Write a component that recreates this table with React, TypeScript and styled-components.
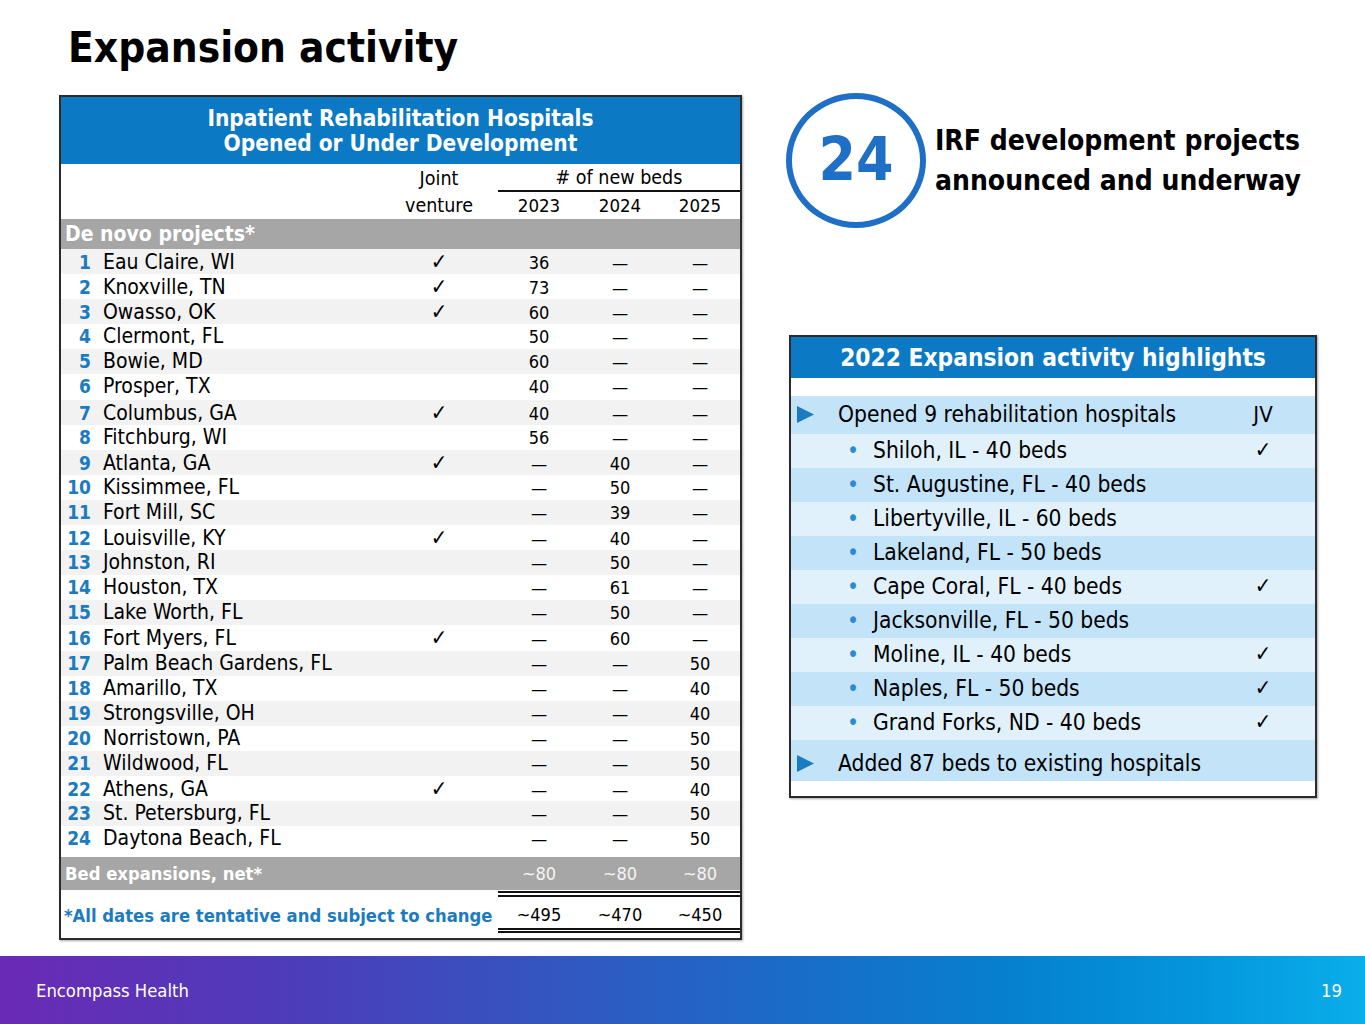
import styled, { createGlobalStyle } from "styled-components";

type Project = [number, string, boolean, string, string, string];

const projects: Project[] = [
  [1, "Eau Claire, WI", true, "36", "—", "—"],
  [2, "Knoxville, TN", true, "73", "—", "—"],
  [3, "Owasso, OK", true, "60", "—", "—"],
  [4, "Clermont, FL", false, "50", "—", "—"],
  [5, "Bowie, MD", false, "60", "—", "—"],
  [6, "Prosper, TX", false, "40", "—", "—"],
  [7, "Columbus, GA", true, "40", "—", "—"],
  [8, "Fitchburg, WI", false, "56", "—", "—"],
  [9, "Atlanta, GA", true, "—", "40", "—"],
  [10, "Kissimmee, FL", false, "—", "50", "—"],
  [11, "Fort Mill, SC", false, "—", "39", "—"],
  [12, "Louisville, KY", true, "—", "40", "—"],
  [13, "Johnston, RI", false, "—", "50", "—"],
  [14, "Houston, TX", false, "—", "61", "—"],
  [15, "Lake Worth, FL", false, "—", "50", "—"],
  [16, "Fort Myers, FL", true, "—", "60", "—"],
  [17, "Palm Beach Gardens, FL", false, "—", "—", "50"],
  [18, "Amarillo, TX", false, "—", "—", "40"],
  [19, "Strongsville, OH", false, "—", "—", "40"],
  [20, "Norristown, PA", false, "—", "—", "50"],
  [21, "Wildwood, FL", false, "—", "—", "50"],
  [22, "Athens, GA", true, "—", "—", "40"],
  [23, "St. Petersburg, FL", false, "—", "—", "50"],
  [24, "Daytona Beach, FL", false, "—", "—", "50"],
];

const opened: [string, boolean][] = [
  ["Shiloh, IL - 40 beds", true],
  ["St. Augustine, FL - 40 beds", false],
  ["Libertyville, IL - 60 beds", false],
  ["Lakeland, FL - 50 beds", false],
  ["Cape Coral, FL - 40 beds", true],
  ["Jacksonville, FL - 50 beds", false],
  ["Moline, IL - 40 beds", true],
  ["Naples, FL - 50 beds", true],
  ["Grand Forks, ND - 40 beds", true],
];

const GlobalStyle = createGlobalStyle`
  body {
    margin: 0;
    background: #fff;
  }
  * {
    box-sizing: border-box;
  }
`;

const Slide = styled.div`
  width: 1365px;
  height: 1024px;
  display: flex;
  flex-direction: column;
  overflow: hidden;
  font-family: "DejaVu Sans Condensed", "DejaVu Sans", sans-serif;
  font-stretch: condensed;
  color: #000;
`;

const Content = styled.main`
  flex: 1;
  padding: 21px 0 0 59px;
`;

const Title = styled.h1`
  margin: 0 0 20px 9px;
  font-size: 42px;
  line-height: 54px;
  font-weight: 700;
`;

const Columns = styled.div`
  display: grid;
  grid-template-columns: 683px 528px;
  column-gap: 47px;
  align-items: start;
`;

/* left table */

const TableCard = styled.section`
  border: 2px solid #2b2b2b;
  box-shadow: 1px 1px 2px rgba(0, 0, 0, 0.35);
  padding-bottom: 5px;
`;

const BlueHead = styled.header<{ $height: number; $size: number }>`
  height: ${({ $height }) => $height}px;
  background: #0b79c3;
  color: #fff;
  font-weight: 700;
  font-size: ${({ $size }) => $size}px;
  line-height: 1.07;
  text-align: center;
  white-space: nowrap;
  display: flex;
  flex-direction: column;
  justify-content: center;
`;

const cols = "36px 302px 99px 82px 80px 80px";

const ColHead = styled.div`
  display: grid;
  grid-template-columns: ${cols};
  grid-template-rows: 28px 27px;
  font-size: 19.5px;
  align-items: center;
  text-align: center;
  white-space: nowrap;
`;

const JvHead = styled.div<{ $row: number }>`
  grid-column: 3;
  grid-row: ${({ $row }) => $row};
  padding-right: 19px;
`;

const BedsHead = styled.div`
  grid-column: 4 / span 3;
  grid-row: 1;
  align-self: stretch;
  display: flex;
  align-items: center;
  justify-content: center;
  border-bottom: 2px solid #111;
`;

const YearHead = styled.div<{ $col: number }>`
  grid-column: ${({ $col }) => $col};
  grid-row: 2;
  font-size: 18.5px;
`;

const Band = styled.div<{ $height: number; $size: number }>`
  display: grid;
  grid-template-columns: ${cols};
  align-items: center;
  height: ${({ $height }) => $height}px;
  background: #a6a6a6;
  color: #fff;
  font-size: ${({ $size }) => $size}px;
`;

const BandLabel = styled.div`
  grid-column: 1 / span 3;
  padding-left: 4px;
  font-weight: 700;
`;

const BandValue = styled.div`
  text-align: center;
  color: #f4f4f4;
  font-size: 18px;
`;

const Row = styled.div<{ $shade: boolean }>`
  display: grid;
  grid-template-columns: ${cols};
  align-items: baseline;
  height: 25.1px;
  font-size: 18px;
  line-height: 25px;
  background: ${({ $shade }) => ($shade ? "#f2f2f2" : "#fff")};
`;

const Num = styled.div`
  text-align: right;
  padding-right: 6px;
  color: #1b7bc0;
  font-weight: 700;
  font-size: 19px;
`;

const Name = styled.div`
  padding-left: 6px;
  font-size: 21px;
  white-space: nowrap;
`;

const Jv = styled.div`
  text-align: center;
  padding-right: 19px;
  font-size: 22px;
`;

const Val = styled.div`
  text-align: center;
`;

const Gap = styled.div`
  height: 6px;
`;

const TotalRow = styled.div`
  display: grid;
  grid-template-columns: ${cols};
  align-items: stretch;
  margin-top: 1px;
  font-size: 18px;
`;

const Note = styled.div`
  grid-column: 1 / span 3;
  display: flex;
  align-items: center;
  padding: 6px 0 0 3px;
  color: #1b7bc0;
  font-weight: 700;
  font-size: 18.3px;
  white-space: nowrap;
`;

const Total = styled.div`
  height: 42px;
  display: flex;
  align-items: center;
  justify-content: center;
  padding-top: 4px;
  border-top: 6px double #111;
  border-bottom: 5px double #111;
`;

/* right column */

const Side = styled.div`
  display: flex;
  flex-direction: column;
`;

const Callout = styled.div`
  display: flex;
  align-items: center;
  gap: 9px;
  margin: -2px 0 0 -3px;
`;

const Circle = styled.div`
  flex: none;
  width: 140px;
  height: 135px;
  border-radius: 50%;
  border: 6px solid #1f6fc6;
  display: grid;
  place-items: center;
  color: #1f6fc6;
  font-size: 60px;
  font-weight: 700;
  padding-bottom: 4px;
`;

const CalloutText = styled.p`
  margin: 0;
  font-size: 28px;
  line-height: 40px;
  font-weight: 700;
  white-space: nowrap;
`;

const HighlightsCard = styled.section`
  margin-top: 107px;
  border: 2px solid #2b2b2b;
  box-shadow: 1px 1px 2px rgba(0, 0, 0, 0.35);
  padding-bottom: 15px;
`;

const Spacer = styled.div`
  height: 18px;
`;

const HRow = styled.div<{ $dark: boolean; $height: number; $shift: number }>`
  display: grid;
  grid-template-columns: 47px 1fr 60px;
  align-items: center;
  height: ${({ $height }) => $height}px;
  padding: 0 22px 0 0;
  padding-top: ${({ $shift }) => Math.max($shift, 0)}px;
  padding-bottom: ${({ $shift }) => Math.max(-$shift, 0)}px;
  font-size: 22.6px;
  background: ${({ $dark }) => ($dark ? "#c3e3f8" : "#e1f1fc")};
`;

const Marker = styled.div`
  padding-left: 6px;
  display: flex;
  align-items: center;
`;

const Bullet = styled.span`
  display: inline-block;
  width: 35px;
  padding-left: 9px;
  color: #2b8ad0;
`;

const HText = styled.div`
  white-space: nowrap;
`;

const HCheck = styled.div`
  text-align: center;
  font-size: 22px;
`;

const Footer = styled.footer`
  height: 68px;
  display: flex;
  align-items: center;
  justify-content: space-between;
  padding: 0 23px 0 36px;
  color: #fff;
  font-size: 18.3px;
  background: linear-gradient(
    90deg,
    #6a2ab5 0%,
    #4c3dba 22%,
    #3158c1 42%,
    #1a6cc9 58%,
    #0680cf 74%,
    #0496dd 88%,
    #0aaeea 100%
  );
`;

const Triangle = () => (
  <svg width="17" height="17" viewBox="0 0 17 17">
    <polygon points="0,0 17,8.5 0,17" fill="#1b7bc0" />
  </svg>
);

export default function App() {
  return (
    <Slide>
      <GlobalStyle />
      <Content>
        <Title>Expansion activity</Title>
        <Columns>
          <TableCard>
            <BlueHead $height={67} $size={22.5}>
              <span>Inpatient Rehabilitation Hospitals</span>
              <span>Opened or Under Development</span>
            </BlueHead>
            <ColHead>
              <JvHead $row={1}>Joint</JvHead>
              <BedsHead># of new beds</BedsHead>
              <JvHead $row={2}>venture</JvHead>
              <YearHead $col={4}>2023</YearHead>
              <YearHead $col={5}>2024</YearHead>
              <YearHead $col={6}>2025</YearHead>
            </ColHead>
            <Band $height={30} $size={21}>
              <BandLabel>De novo projects*</BandLabel>
            </Band>
            {projects.map(([n, name, jv, a, b, c]) => (
              <Row key={n} $shade={n % 2 === 1}>
                <Num>{n}</Num>
                <Name>{name}</Name>
                <Jv>{jv ? "✓" : ""}</Jv>
                <Val>{a}</Val>
                <Val>{b}</Val>
                <Val>{c}</Val>
              </Row>
            ))}
            <Gap />
            <Band $height={33} $size={18.3}>
              <BandLabel>Bed expansions, net*</BandLabel>
              <BandValue>~80</BandValue>
              <BandValue>~80</BandValue>
              <BandValue>~80</BandValue>
            </Band>
            <TotalRow>
              <Note>*All dates are tentative and subject to change</Note>
              <Total>~495</Total>
              <Total>~470</Total>
              <Total>~450</Total>
            </TotalRow>
          </TableCard>

          <Side>
            <Callout>
              <Circle>24</Circle>
              <CalloutText>
                IRF development projects
                <br />
                announced and underway
              </CalloutText>
            </Callout>

            <HighlightsCard>
              <BlueHead $height={41} $size={24.3}>
                2022 Expansion activity highlights
              </BlueHead>
              <Spacer />
              <HRow $dark $height={38} $shift={-2}>
                <Marker>
                  <Triangle />
                </Marker>
                <HText>Opened 9 rehabilitation hospitals</HText>
                <HCheck>JV</HCheck>
              </HRow>
              {opened.map(([label, jv], i) => (
                <HRow key={label} $dark={i % 2 === 1} $height={34} $shift={-3}>
                  <span />
                  <HText>
                    <Bullet>•</Bullet>
                    {label}
                  </HText>
                  <HCheck>{jv ? "✓" : ""}</HCheck>
                </HRow>
              ))}
              <HRow $dark $height={41} $shift={5}>
                <Marker>
                  <Triangle />
                </Marker>
                <HText>Added 87 beds to existing hospitals</HText>
                <span />
              </HRow>
            </HighlightsCard>
          </Side>
        </Columns>
      </Content>
      <Footer>
        <span>Encompass Health</span>
        <span>19</span>
      </Footer>
    </Slide>
  );
}
